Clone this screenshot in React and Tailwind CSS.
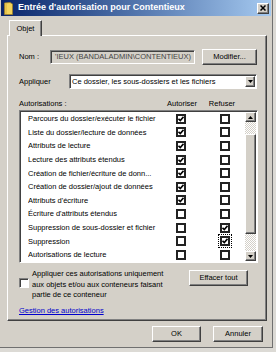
const ROWS = [
  ['Parcours du dossier/exécuter le fichier', true, false],
  ['Liste du dossier/lecture de données', true, false],
  ['Attributs de lecture', true, false],
  ['Lecture des attributs étendus', true, false],
  ['Création de fichier/écriture de donn...', true, false],
  ['Création de dossier/ajout de données', true, false],
  ["Attributs d'écriture", true, false],
  ["Écriture d'attributs étendus", false, false],
  ['Suppression de sous-dossier et fichier', false, true],
  ['Suppression', false, true, true],
  ['Autorisations de lecture', false, false],
  ['', false, false],
]

const raised = 'border border-t-white border-l-white border-r-[#404040] border-b-[#404040] shadow-[inset_-1px_-1px_0_#808080] bg-[#d4d0c8]'
const sunken = 'border border-t-[#808080] border-l-[#808080] border-r-white border-b-white shadow-[inset_1px_1px_0_#404040]'

function Check({ on, focus }) {
  return (
    <div className={`w-[10px] h-[10px] shrink-0 border-2 border-[#222] bg-white flex items-center justify-center ${focus ? 'outline outline-1 outline-dotted outline-black outline-offset-1' : ''}`}>
      {on && (
        <svg width="6" height="6" viewBox="0 0 6 6">
          <path d="M0.5 2.8 L2.3 4.6 L5.5 0.8" fill="none" stroke="#000" strokeWidth="1.6" />
        </svg>
      )}
    </div>
  )
}

function Arrow({ up }) {
  return (
    <div className={`${raised} w-[11px] h-[10px] flex items-center justify-center shrink-0`}>
      <svg width="5" height="3" viewBox="0 0 5 3">
        <path d={up ? 'M0 3 L2.5 0 L5 3 Z' : 'M0 0 L5 0 L2.5 3 Z'} fill="#000" />
      </svg>
    </div>
  )
}

export default function App() {
  return (
    <div className="w-[276px] h-[352px] bg-[#dcdad5] overflow-hidden" style={{ fontFamily: '"Liberation Sans", Arial, sans-serif' }}>
      <div className="w-[273px] h-[348px] bg-[#d4d0c8] border-r border-b border-[#707070] flex flex-col">
        {/* Title bar */}
        <div className="h-[16px] ml-[1px] mr-[1px] flex items-center bg-gradient-to-r from-[#0a246a] to-[#a6caf0] pl-[3px] pr-[2px]">
          <svg width="9" height="13" viewBox="0 0 9 13" className="shrink-0">
            <path d="M0.5 1 L6 0.5 L8.5 2 L8.5 12.5 L0.5 12.5 Z" fill="#f3d35a" stroke="#a0802a" strokeWidth="0.8" />
            <path d="M2 2 L2 12" stroke="#d9b23e" strokeWidth="1" />
          </svg>
          <span className="ml-[5px] text-white font-bold text-[9px] whitespace-nowrap">Entrée d'autorisation pour Contentieux</span>
          <div className={`${raised} ml-auto w-[12px] h-[11px] flex items-center justify-center`}>
            <svg width="6" height="6" viewBox="0 0 6 6">
              <path d="M0.5 0.5 L5.5 5.5 M5.5 0.5 L0.5 5.5" stroke="#000" strokeWidth="1.5" />
            </svg>
          </div>
        </div>

        {/* Tab */}
        <div className="mt-[4px] ml-[9px] w-[33px] h-[16px] border-t border-l border-white border-r border-r-[#404040] shadow-[inset_-1px_0_0_#808080] flex items-center justify-center text-[7.5px] text-black relative z-10 bg-[#d4d0c8]">
          Objet
        </div>

        {/* Tab panel */}
        <div className="-mt-[1px] ml-[7px] w-[260px] h-[286px] border-t border-l border-white border-r border-b border-r-[#404040] border-b-[#404040] shadow-[inset_-1px_-1px_0_#808080] pl-[11px] pt-[13px] text-[7.5px] text-black">
          <div className="flex items-center h-[16px]">
            <span className="w-[31px]">Nom :</span>
            <div className={`${sunken} w-[145px] h-[14px] bg-[#d4d0c8] flex items-center overflow-hidden pl-[4px] text-[#444] whitespace-nowrap`}>
              'IEUX (BANDALADMIN\CONTENTIEUX)
            </div>
            <div className={`${raised} ml-[7px] w-[55px] h-[16px] flex items-center justify-center`}>Modifier...</div>
          </div>

          <div className="flex items-center mt-[9px] h-[15px]">
            <span className="w-[50px]">Appliquer</span>
            <div className={`${sunken} w-[188px] h-[15px] bg-white flex items-center pl-[2px] pr-[1px]`}>
              <span className="flex-1 whitespace-nowrap">Ce dossier, les sous-dossiers et les fichiers</span>
              <div className={`${raised} w-[10px] h-[11px] flex items-center justify-center`}>
                <svg width="5" height="3" viewBox="0 0 5 3"><path d="M0 0 L5 0 L2.5 3 Z" fill="#000" /></svg>
              </div>
            </div>
          </div>

          <div className="flex items-center mt-[10px] h-[10px]">
            <span className="w-[143px]">Autorisations :</span>
            <span className="w-[40px] text-center">Autoriser</span>
            <span className="w-[40px] text-center">Refuser</span>
          </div>

          <div className={`${sunken} mt-[1px] w-[239px] h-[153px] bg-white flex overflow-hidden`}>
            <div className="flex-1 pt-[1px] pl-[8px] overflow-hidden">
              {ROWS.map(([label, allow, deny, focus], i) => (
                <div key={i} className="flex items-center h-[13.6px]">
                  <span className="w-[148px] whitespace-nowrap overflow-hidden">{label}</span>
                  <Check on={allow} />
                  <div className="w-[34px]" />
                  <Check on={deny} focus={focus} />
                </div>
              ))}
            </div>
            <div className="w-[11px] mr-[1px] mt-[1px] mb-[1px] flex flex-col">
              <Arrow up />
              <div className="h-[12px] bg-[repeating-conic-gradient(#d4d0c8_0%_25%,#ffffff_0%_50%)] bg-[length:2px_2px]" />
              <div className={`${raised} h-[100px]`} />
              <div className="flex-1 bg-[repeating-conic-gradient(#d4d0c8_0%_25%,#ffffff_0%_50%)] bg-[length:2px_2px]" />
              <Arrow />
            </div>
          </div>

          <div className="flex items-start mt-[6px]">
            <div className="flex items-center h-[28px] w-[13px]">
              <div className={`${sunken} w-[10px] h-[10px] bg-white`} />
            </div>
            <p className="w-[156px] leading-[10.5px] whitespace-nowrap">
              Appliquer ces autorisations uniquement<br />
              aux objets et/ou aux conteneurs faisant<br />
              partie de ce conteneur
            </p>
            <div className={`${raised} ml-[1px] mt-[1px] w-[59px] h-[16px] flex items-center justify-center`}>Effacer tout</div>
          </div>

          <a href="#" className="block mt-[4px] w-fit text-[#0000cc] underline">Gestion des autorisations</a>
        </div>

        {/* Footer buttons */}
        <div className="flex mt-[5px] ml-[152px] gap-[12px] text-[7.5px] text-black">
          <div className={`${raised} w-[49px] h-[16px] flex items-center justify-center`}>OK</div>
          <div className={`${raised} w-[50px] h-[16px] flex items-center justify-center`}>Annuler</div>
        </div>
      </div>
    </div>
  )
}
